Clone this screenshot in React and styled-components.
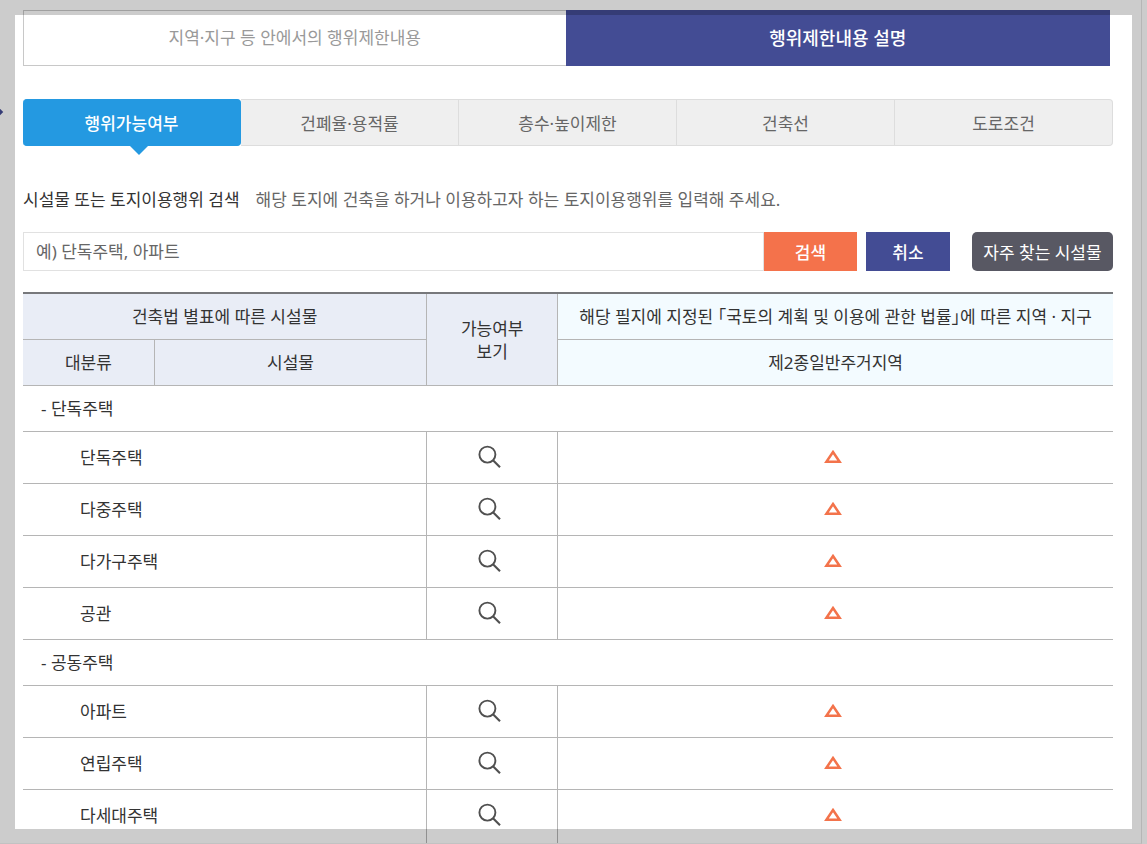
import React, { useState } from 'react';
import styled, { createGlobalStyle, css } from 'styled-components';

const TABS = ['행위가능여부', '건폐율·용적률', '층수·높이제한', '건축선', '도로조건'];

const GROUPS = [
  { name: '단독주택', items: ['단독주택', '다중주택', '다가구주택', '공관'] },
  { name: '공동주택', items: ['아파트', '연립주택', '다세대주택'] },
];

const App = () => {
  const [tab, setTab] = useState(0);
  const [keyword, setKeyword] = useState('');

  return (
    <>
      <GlobalStyle />
      <Page>
        <SideArrow />
        <MainTabs>
          <MainTab>지역·지구 등 안에서의 행위제한내용</MainTab>
          <MainTab $active>행위제한내용 설명</MainTab>
        </MainTabs>
        <SubTabs>
          {TABS.map((name, i) => (
            <SubTab key={name} $active={tab === i} onClick={() => setTab(i)}>{name}</SubTab>
          ))}
        </SubTabs>
        <SearchTitle>
          <label htmlFor="keyword">시설물 또는 토지이용행위 검색</label>
          <span>해당 토지에 건축을 하거나 이용하고자 하는 토지이용행위를 입력해 주세요.</span>
        </SearchTitle>
        <SearchBar onSubmit={(e) => e.preventDefault()}>
          <SearchInput
            id="keyword"
            placeholder="예) 단독주택, 아파트"
            value={keyword}
            onChange={(e) => setKeyword(e.target.value)}
          />
          <SearchBtn>검색</SearchBtn>
          <CancelBtn type="button" onClick={() => setKeyword('')}>취소</CancelBtn>
          <FavoriteBtn type="button">자주 찾는 시설물</FavoriteBtn>
        </SearchBar>
        <Table>
          <colgroup>
            <col width="12%" />
            <col width="25%" />
            <col width="12%" />
            <col />
          </colgroup>
          <thead>
            <tr>
              <HeadCell colSpan={2}>건축법 별표에 따른 시설물</HeadCell>
              <HeadCell rowSpan={2}>가능여부<br />보기</HeadCell>
              <HeadCell $zone>해당 필지에 지정된 「국토의 계획 및 이용에 관한 법률」에 따른 지역 · 지구</HeadCell>
            </tr>
            <tr>
              <HeadCell>대분류</HeadCell>
              <HeadCell>시설물</HeadCell>
              <HeadCell $zone>제2종일반주거지역</HeadCell>
            </tr>
          </thead>
          {GROUPS.map((group) => (
            <tbody key={group.name}>
              <tr>
                <GroupCell colSpan={4}>- {group.name}</GroupCell>
              </tr>
              {group.items.map((item) => (
                <tr key={item}>
                  <NameCell colSpan={2}>{item}</NameCell>
                  <IconCell>
                    <ViewBtn aria-label={`${item} 가능여부 보기`}><SearchIcon /></ViewBtn>
                  </IconCell>
                  <IconCell><TriangleIcon /></IconCell>
                </tr>
              ))}
            </tbody>
          ))}
        </Table>
      </Page>
      <Dim />
    </>
  );
};

export default App;

const SearchIcon = () => (
  <svg width="24" height="26" viewBox="0 0 24 26" fill="none" stroke="#505050">
    <circle cx="9.4" cy="9.6" r="8" strokeWidth="1.9" />
    <path d="M15 15.2L22 22.2" strokeWidth="2.1" />
  </svg>
);

const TriangleIcon = () => (
  <svg width="18" height="16" viewBox="0 0 18 16" fill="none">
    <path d="M9 2L15.6 11.8H2.4Z" stroke="#f3734b" strokeWidth="2.5" />
  </svg>
);

const GlobalStyle = createGlobalStyle`
  * {
    box-sizing: border-box;
  }
  body {
    margin: 0;
    background: #fff;
    overflow: hidden;
  }
  body, button, input {
    font-family: 'Noto Sans', 'Noto Sans CJK KR', sans-serif;
    font-size: 17px;
    color: #333;
  }
  button {
    border: 0;
    padding: 0;
    cursor: pointer;
  }
`;

const Page = styled.main`
  position: relative;
  height: 100vh;
  margin-right: 5px;
  padding: 10px 28px 0 23px;
  border-right: 1px solid #e4e4e4;
  border-bottom: 1px solid #f3f3f3;
  overflow: hidden;
`;

const SideArrow = styled.i`
  position: absolute;
  left: -4px;
  top: 109px;
  width: 6px;
  height: 6px;
  background: #434c94;
  transform: rotate(45deg);
`;

// shade around the edge of the window
const Dim = styled.div`
  position: fixed;
  inset: 0;
  border: 15px solid rgba(0, 0, 0, 0.2);
  pointer-events: none;
`;

const MainTabs = styled.div`
  display: grid;
  grid-template-columns: 1fr 1fr;
  margin-right: 3px;
`;

const MainTab = styled.button`
  height: 56px;
  padding-bottom: 3px;
  background: #fff;
  border: 1px solid #c8c8c8;
  color: #999;
  & + & {
    margin-left: -1px;
  }
  ${({ $active }) => $active && css`
    background: #434c94;
    border-color: #434c94;
    color: #fff;
    font-size: 18px;
    font-weight: 500;
  `}
`;

const SubTabs = styled.div`
  display: grid;
  grid-template-columns: repeat(5, 1fr);
  margin-top: 33px;
`;

const SubTab = styled.button`
  position: relative;
  height: 47px;
  background: #efefef;
  border: solid #ddd;
  border-width: 1px 1px 1px 0;
  color: #666;
  &:last-child {
    border-radius: 0 4px 4px 0;
  }
  ${({ $active }) => $active && css`
    background: #2499e1;
    border-color: #2499e1;
    border-radius: 4px;
    color: #fff;
    font-weight: 500;
    &::after {
      content: '';
      position: absolute;
      left: 50%;
      top: 100%;
      margin-left: -3px;
      border: 10px solid transparent;
      border-top-color: #2499e1;
      border-bottom: 0;
    }
  `}
`;

const SearchTitle = styled.div`
  display: flex;
  gap: 16px;
  margin-top: 41px;
  line-height: 25px;
  span {
    color: #666;
  }
`;

const SearchBar = styled.form`
  display: flex;
  height: 39px;
  margin-top: 20px;
`;

const SearchInput = styled.input`
  flex: 1;
  min-width: 0;
  padding: 0 12px;
  border: 1px solid #e1e1e1;
  outline: none;
  &::placeholder {
    color: #666;
    opacity: 1;
  }
`;

const SearchBtn = styled.button`
  width: 93px;
  background: #f4724b;
  color: #fff;
  font-weight: 500;
`;

const CancelBtn = styled(SearchBtn)`
  width: 84px;
  margin-left: 9px;
  background: #434c94;
`;

const FavoriteBtn = styled(SearchBtn)`
  width: 141px;
  margin-left: 22px;
  border-radius: 5px;
  background: #585863;
  font-weight: 400;
`;

const Table = styled.table`
  width: 100%;
  margin-top: 21px;
  border-top: 2px solid #77787b;
  border-collapse: separate;
  border-spacing: 0;
  table-layout: fixed;
  tbody:last-child tr:last-child td {
    height: 56px;
    padding-bottom: 4px;
  }
`;

const HeadCell = styled.th`
  height: 46px;
  padding: 0;
  background: ${({ $zone }) => ($zone ? '#f3fbff' : '#e9edf6')};
  border-bottom: 1px solid #b5b5b5;
  font-weight: 400;
  font-feature-settings: 'halt';
  line-height: 23px;
  & + & {
    border-left: 1px solid #b5b5b5;
  }
`;

const Cell = styled.td`
  height: 52px;
  padding: 0;
  border-bottom: 1px solid #b5b5b5;
  line-height: 23px;
`;

const GroupCell = styled(Cell)`
  height: 46px;
  padding-left: 18px;
`;

const NameCell = styled(Cell)`
  padding-left: 57px;
`;

const IconCell = styled(Cell)`
  padding-right: 5px;
  border-left: 1px solid #b5b5b5;
  svg {
    display: block;
    margin: 0 auto;
  }
`;

const ViewBtn = styled.button`
  display: block;
  margin: 0 auto;
  background: none;
`;
